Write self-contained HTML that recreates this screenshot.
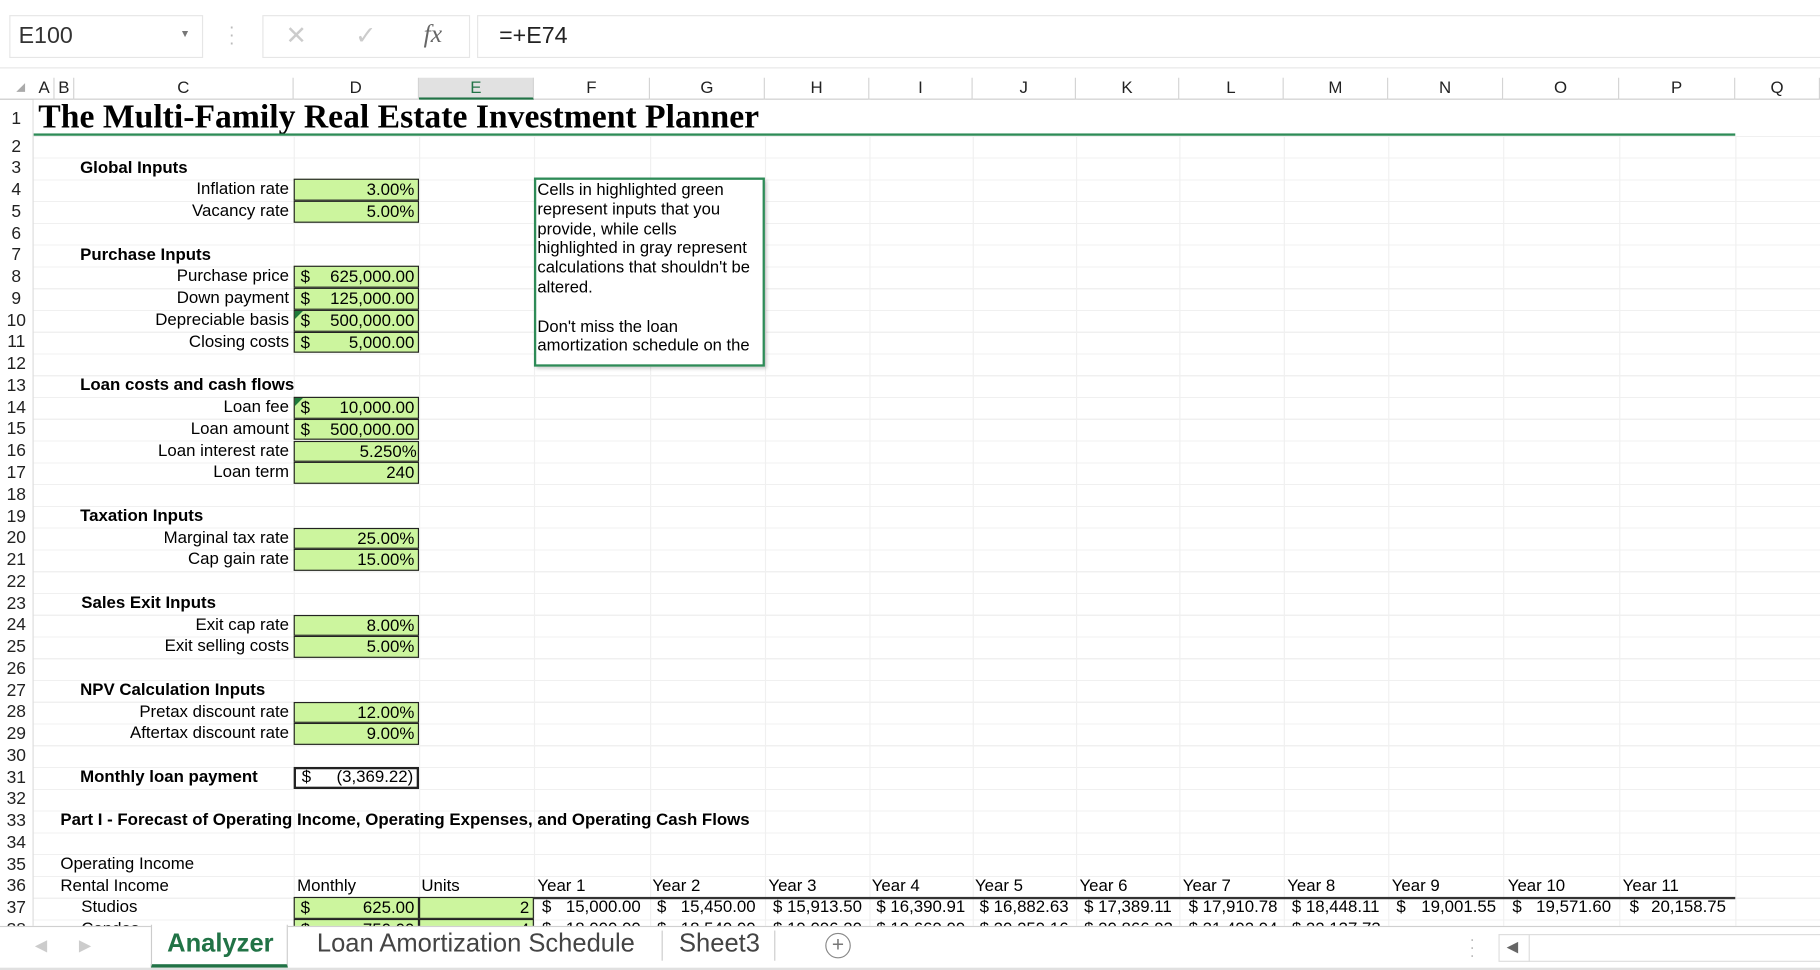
<!DOCTYPE html>
<html><head><meta charset="utf-8">
<style>
html,body{margin:0;padding:0;width:1820px;height:970px;overflow:hidden;background:#fff;}
#w{position:absolute;left:0;top:0;width:1568px;height:836px;transform:scale(1.16071,1.16029);transform-origin:0 0;font-family:"Liberation Sans",Arial,sans-serif;color:#000;background:#fff;overflow:hidden;}
.a{position:absolute;white-space:nowrap;}
.c{position:absolute;height:18.76px;line-height:18.76px;font-size:14.5px;white-space:nowrap;}
.r{text-align:right;}
.g{background:#ccf59e;border:1px solid #222;box-sizing:border-box;display:flex;justify-content:space-between;padding:0 3px 0 5px;}
.b{font-weight:bold;}
.rh{position:absolute;left:0;width:28px;text-align:center;font-size:15px;color:#222;height:18.76px;line-height:18.76px;}
.ch{position:absolute;top:67px;height:19px;line-height:19px;text-align:center;font-size:14.5px;color:#222;border-right:1px solid #d4d4d4;box-sizing:border-box;}
.vl{position:absolute;top:86px;height:712px;width:1px;background:#f0f0f0;}
.m{display:flex;justify-content:space-between;}
</style></head><body><div id="w">
<div class="a" style="left:8px;top:13px;width:167px;height:37px;border:1px solid #e6e6e6;box-sizing:border-box;"></div>
<div class="a" style="left:16px;top:20px;font-size:20px;color:#333;">E100</div>
<div class="a" style="left:155px;top:24px;font-size:9px;color:#777;">&#9660;</div>
<div class="a" style="left:197px;top:20px;font-size:16px;color:#bbb;line-height:7px;">·<br>·<br>·</div>
<div class="a" style="left:226px;top:13px;width:179px;height:37px;border:1px solid #e6e6e6;box-sizing:border-box;"></div>
<div class="a" style="left:246px;top:18px;font-size:22px;color:#ccc;">✕</div>
<div class="a" style="left:306px;top:18px;font-size:22px;color:#ccc;">✓</div>
<div class="a" style="left:365px;top:16px;font-size:22px;color:#666;font-family:'Liberation Serif',serif;font-style:italic;">fx</div>
<div class="a" style="left:411px;top:13px;width:1200px;height:37px;border:1px solid #e6e6e6;box-sizing:border-box;"></div>
<div class="a" style="left:430px;top:20px;font-size:20px;color:#222;">=+E74</div>
<div class="a" style="left:0;top:58px;width:1568px;height:1px;background:#e6e6e6;"></div>
<div class="a" style="left:0;top:85px;width:1568px;height:1px;background:#c8c8c8;"></div>
<div class="a" style="left:14px;top:70px;font-size:10px;color:#aaa;">◢</div>
<div class="ch" style="left:30px;width:17px;">A</div>
<div class="ch" style="left:47px;width:17px;">B</div>
<div class="ch" style="left:64px;width:189px;">C</div>
<div class="ch" style="left:253px;width:108px;">D</div>
<div class="ch" style="left:361px;width:99px;background:#e1e1e1;border-bottom:2px solid #217346;color:#217346;">E</div>
<div class="ch" style="left:460px;width:100px;">F</div>
<div class="ch" style="left:560px;width:99px;">G</div>
<div class="ch" style="left:659px;width:90px;">H</div>
<div class="ch" style="left:749px;width:89px;">I</div>
<div class="ch" style="left:838px;width:89px;">J</div>
<div class="ch" style="left:927px;width:89px;">K</div>
<div class="ch" style="left:1016px;width:90px;">L</div>
<div class="ch" style="left:1106px;width:90px;">M</div>
<div class="ch" style="left:1196px;width:99px;">N</div>
<div class="ch" style="left:1295px;width:100px;">O</div>
<div class="ch" style="left:1395px;width:100px;">P</div>
<div class="ch" style="left:1495px;width:73px;">Q</div>
<div class="a" style="left:28px;top:117px;width:1540px;height:681px;background:repeating-linear-gradient(to bottom,#f0f0f0 0,#f0f0f0 1px,transparent 1px,transparent 18.76px);"></div>
<div class="a" style="left:28px;top:86px;width:1px;height:712px;background:#dcdcdc;"></div>
<div class="vl" style="left:253px"></div><div class="vl" style="left:361px"></div><div class="vl" style="left:460px"></div><div class="vl" style="left:560px"></div><div class="vl" style="left:659px"></div><div class="vl" style="left:749px"></div><div class="vl" style="left:838px"></div><div class="vl" style="left:927px"></div><div class="vl" style="left:1016px"></div><div class="vl" style="left:1106px"></div><div class="vl" style="left:1196px"></div><div class="vl" style="left:1295px"></div><div class="vl" style="left:1395px"></div><div class="vl" style="left:1495px"></div>
<div class="rh" style="top:94px;">1</div>
<div class="rh" style="top:117.5px">2</div><div class="rh" style="top:136.3px">3</div><div class="rh" style="top:155.1px">4</div><div class="rh" style="top:173.8px">5</div><div class="rh" style="top:192.6px">6</div><div class="rh" style="top:211.3px">7</div><div class="rh" style="top:230.1px">8</div><div class="rh" style="top:248.9px">9</div><div class="rh" style="top:267.6px">10</div><div class="rh" style="top:286.4px">11</div><div class="rh" style="top:305.1px">12</div><div class="rh" style="top:323.9px">13</div><div class="rh" style="top:342.7px">14</div><div class="rh" style="top:361.4px">15</div><div class="rh" style="top:380.2px">16</div><div class="rh" style="top:398.9px">17</div><div class="rh" style="top:417.7px">18</div><div class="rh" style="top:436.5px">19</div><div class="rh" style="top:455.2px">20</div><div class="rh" style="top:474px">21</div><div class="rh" style="top:492.7px">22</div><div class="rh" style="top:511.5px">23</div><div class="rh" style="top:530.3px">24</div><div class="rh" style="top:549px">25</div><div class="rh" style="top:567.8px">26</div><div class="rh" style="top:586.5px">27</div><div class="rh" style="top:605.3px">28</div><div class="rh" style="top:624.1px">29</div><div class="rh" style="top:642.8px">30</div><div class="rh" style="top:661.6px">31</div><div class="rh" style="top:680.3px">32</div><div class="rh" style="top:699.1px">33</div><div class="rh" style="top:717.9px">34</div><div class="rh" style="top:736.6px">35</div><div class="rh" style="top:755.4px">36</div><div class="rh" style="top:774.1px">37</div><div class="rh" style="top:792.9px">38</div>
<div class="a" style="left:29px;top:86px;width:1540px;height:31px;background:#fff;"></div>
<div class="a" style="left:33px;top:84px;font-family:'Liberation Serif',serif;font-weight:bold;font-size:29px;line-height:34px;">The Multi-Family Real Estate Investment Planner</div>
<div class="a" style="left:29px;top:115px;width:1466px;height:2px;background:#2e8b57;"></div>
<div class="c b" style="left:69px;top:135.6px">Global Inputs</div>
<div class="c r" style="left:64px;width:185px;top:154.4px">Inflation rate</div>
<div class="c r" style="left:64px;width:185px;top:173.1px">Vacancy rate</div>
<div class="c b" style="left:69px;top:210.6px">Purchase Inputs</div>
<div class="c r" style="left:64px;width:185px;top:229.4px">Purchase price</div>
<div class="c r" style="left:64px;width:185px;top:248.2px">Down payment</div>
<div class="c r" style="left:64px;width:185px;top:266.9px">Depreciable basis</div>
<div class="c r" style="left:64px;width:185px;top:285.7px">Closing costs</div>
<div class="c b" style="left:69px;top:323.2px">Loan costs and cash flows</div>
<div class="c r" style="left:64px;width:185px;top:342px">Loan fee</div>
<div class="c r" style="left:64px;width:185px;top:360.7px">Loan amount</div>
<div class="c r" style="left:64px;width:185px;top:379.5px">Loan interest rate</div>
<div class="c r" style="left:64px;width:185px;top:398.2px">Loan term</div>
<div class="c b" style="left:69px;top:435.8px">Taxation Inputs</div>
<div class="c r" style="left:64px;width:185px;top:454.5px">Marginal tax rate</div>
<div class="c r" style="left:64px;width:185px;top:473.3px">Cap gain rate</div>
<div class="c b" style="left:70px;top:510.8px">Sales Exit Inputs</div>
<div class="c r" style="left:64px;width:185px;top:529.6px">Exit cap rate</div>
<div class="c r" style="left:64px;width:185px;top:548.3px">Exit selling costs</div>
<div class="c b" style="left:69px;top:585.8px">NPV Calculation Inputs</div>
<div class="c r" style="left:64px;width:185px;top:604.6px">Pretax discount rate</div>
<div class="c r" style="left:64px;width:185px;top:623.4px">Aftertax discount rate</div>
<div class="c b" style="left:69px;top:660.9px">Monthly loan payment</div>
<div class="c b" style="left:52px;top:698.4px;">Part I - Forecast of Operating Income, Operating Expenses, and Operating Cash Flows</div>
<div class="c" style="left:52px;top:735.9px">Operating Income</div>
<div class="c" style="left:52px;top:754.7px">Rental Income</div>
<div class="c" style="left:70px;top:773.4px">Studios</div>
<div class="c g" style="left:253px;width:108px;top:154.4px;justify-content:flex-end">3.00%</div>
<div class="c g" style="left:253px;width:108px;top:173.1px;justify-content:flex-end">5.00%</div>
<div class="c g" style="left:253px;width:108px;top:229.4px"><span>$</span><span>625,000.00</span></div>
<div class="c g" style="left:253px;width:108px;top:248.2px"><span>$</span><span>125,000.00</span></div>
<div class="c g" style="left:253px;width:108px;top:266.9px"><span>$</span><span>500,000.00</span></div>
<div class="c g" style="left:253px;width:108px;top:285.7px"><span>$</span><span>5,000.00</span></div>
<div class="c g" style="left:253px;width:108px;top:342px"><span>$</span><span>10,000.00</span></div>
<div class="c g" style="left:253px;width:108px;top:360.7px"><span>$</span><span>500,000.00</span></div>
<div class="c g" style="left:253px;width:108px;top:379.5px;justify-content:flex-end;padding-right:1px">5.250%</div>
<div class="c g" style="left:253px;width:108px;top:398.2px;justify-content:flex-end">240</div>
<div class="c g" style="left:253px;width:108px;top:454.5px;justify-content:flex-end">25.00%</div>
<div class="c g" style="left:253px;width:108px;top:473.3px;justify-content:flex-end">15.00%</div>
<div class="c g" style="left:253px;width:108px;top:529.6px;justify-content:flex-end">8.00%</div>
<div class="c g" style="left:253px;width:108px;top:548.3px;justify-content:flex-end">5.00%</div>
<div class="c g" style="left:253px;width:108px;top:604.6px;justify-content:flex-end">12.00%</div>
<div class="c g" style="left:253px;width:108px;top:623.4px;justify-content:flex-end">9.00%</div>
<div class="a" style="left:254px;top:267.5px;width:0;height:0;border-top:7px solid #1e7a3a;border-right:7px solid transparent;"></div>
<div class="a" style="left:254px;top:342.6px;width:0;height:0;border-top:7px solid #1e7a3a;border-right:7px solid transparent;"></div>
<div class="c g" style="left:253px;width:108px;top:660.9px;background:#fff;border:2px solid #222;line-height:15px;"><span>$</span><span>(3,369.22)</span></div>
<div class="a" style="left:460px;top:153px;width:199px;height:163px;border:2px solid #2e8b57;box-sizing:border-box;background:#fff;box-shadow:2px 2px 3px rgba(0,0,0,.2);font-size:14.3px;line-height:16.8px;padding:1px 8px 1px 1px;white-space:normal;overflow:hidden;">Cells in highlighted green represent inputs that you provide, while cells highlighted in gray represent calculations that shouldn't be altered.<br><br>Don't miss the loan amortization schedule on the</div>
<div class="c" style="left:256px;top:754.7px">Monthly</div>
<div class="c" style="left:363px;top:754.7px">Units</div>
<div class="c" style="left:463px;top:754.7px">Year 1</div>
<div class="c" style="left:562px;top:754.7px">Year 2</div>
<div class="c" style="left:662px;top:754.7px">Year 3</div>
<div class="c" style="left:751px;top:754.7px">Year 4</div>
<div class="c" style="left:840px;top:754.7px">Year 5</div>
<div class="c" style="left:930px;top:754.7px">Year 6</div>
<div class="c" style="left:1019px;top:754.7px">Year 7</div>
<div class="c" style="left:1109px;top:754.7px">Year 8</div>
<div class="c" style="left:1199px;top:754.7px">Year 9</div>
<div class="c" style="left:1299px;top:754.7px">Year 10</div>
<div class="c" style="left:1398px;top:754.7px">Year 11</div>
<div class="a" style="left:460px;top:772.5px;width:1035px;height:2px;background:#333;"></div>
<div class="c g" style="left:253px;width:108px;top:773.4px"><span>$</span><span>625.00</span></div>
<div class="c g" style="left:361px;width:99px;top:773.4px;justify-content:flex-end">2</div>
<div class="c g" style="left:253px;width:108px;top:792.2px"><span>$</span><span>750.00</span></div>
<div class="c g" style="left:361px;width:99px;top:792.2px;justify-content:flex-end">4</div>
<div class="c m" style="left:467px;width:85px;top:773.4px"><span>$</span><span>15,000.00</span></div>
<div class="c m" style="left:566px;width:85px;top:773.4px"><span>$</span><span>15,450.00</span></div>
<div class="c" style="left:666px;top:773.4px">$ 15,913.50</div>
<div class="c" style="left:755px;top:773.4px">$ 16,390.91</div>
<div class="c" style="left:844px;top:773.4px">$ 16,882.63</div>
<div class="c" style="left:934px;top:773.4px">$ 17,389.11</div>
<div class="c" style="left:1024px;top:773.4px">$ 17,910.78</div>
<div class="c" style="left:1113px;top:773.4px">$ 18,448.11</div>
<div class="c m" style="left:1203px;width:86px;top:773.4px"><span>$</span><span>19,001.55</span></div>
<div class="c m" style="left:1303px;width:85px;top:773.4px"><span>$</span><span>19,571.60</span></div>
<div class="c m" style="left:1404px;width:83px;top:773.4px"><span>$</span><span>20,158.75</span></div>
<div class="c" style="left:70px;top:792.2px">Condos</div>
<div class="c m" style="left:467px;width:85px;top:792.2px"><span>$</span><span>18,000.00</span></div>
<div class="c m" style="left:566px;width:85px;top:792.2px"><span>$</span><span>18,540.00</span></div>
<div class="c" style="left:666px;top:792.2px">$ 19,096.20</div>
<div class="c" style="left:755px;top:792.2px">$ 19,669.09</div>
<div class="c" style="left:844px;top:792.2px">$ 20,259.16</div>
<div class="c" style="left:934px;top:792.2px">$ 20,866.93</div>
<div class="c" style="left:1024px;top:792.2px">$ 21,492.94</div>
<div class="c" style="left:1113px;top:792.2px">$ 22,137.73</div>
<div class="a" style="left:0;top:798px;width:1568px;height:38px;background:#fff;border-top:1px solid #d0d0d0;box-sizing:border-box;"></div>
<div class="a" style="left:30px;top:806px;font-size:14px;color:#ccc;">&#9664;</div>
<div class="a" style="left:68px;top:806px;font-size:14px;color:#ccc;">&#9654;</div>
<div class="a" style="left:130px;top:797px;width:118px;height:37px;background:#fff;border-left:1px solid #ccc;border-right:1px solid #ccc;border-bottom:3px solid #217346;box-sizing:border-box;"></div>
<div class="a" style="left:144px;top:800px;font-size:22px;font-weight:bold;color:#217346;">Analyzer</div>
<div class="a" style="left:273px;top:800px;font-size:22px;color:#444;">Loan Amortization Schedule</div>
<div class="a" style="left:570px;top:802px;width:1px;height:26px;background:#ccc;"></div>
<div class="a" style="left:585px;top:800px;font-size:22px;color:#444;">Sheet3</div>
<div class="a" style="left:667px;top:802px;width:1px;height:26px;background:#ccc;"></div>
<div class="a" style="left:711px;top:804px;width:22px;height:22px;border:1.5px solid #888;border-radius:50%;box-sizing:border-box;text-align:center;line-height:18px;font-size:18px;color:#777;">+</div>
<div class="a" style="left:1266px;top:806px;font-size:14px;color:#bbb;line-height:7px;">·<br>·<br>·</div>
<div class="a" style="left:1291px;top:805px;width:280px;height:24px;border:1px solid #ddd;box-sizing:border-box;"></div>
<div class="a" style="left:1317px;top:805px;width:1px;height:24px;background:#ddd;"></div>
<div class="a" style="left:1298px;top:808px;font-size:13px;color:#666;">&#9664;</div>
<div class="a" style="left:0;top:834px;width:1568px;height:2px;background:#e0e0e0;"></div>
</div></body></html>
